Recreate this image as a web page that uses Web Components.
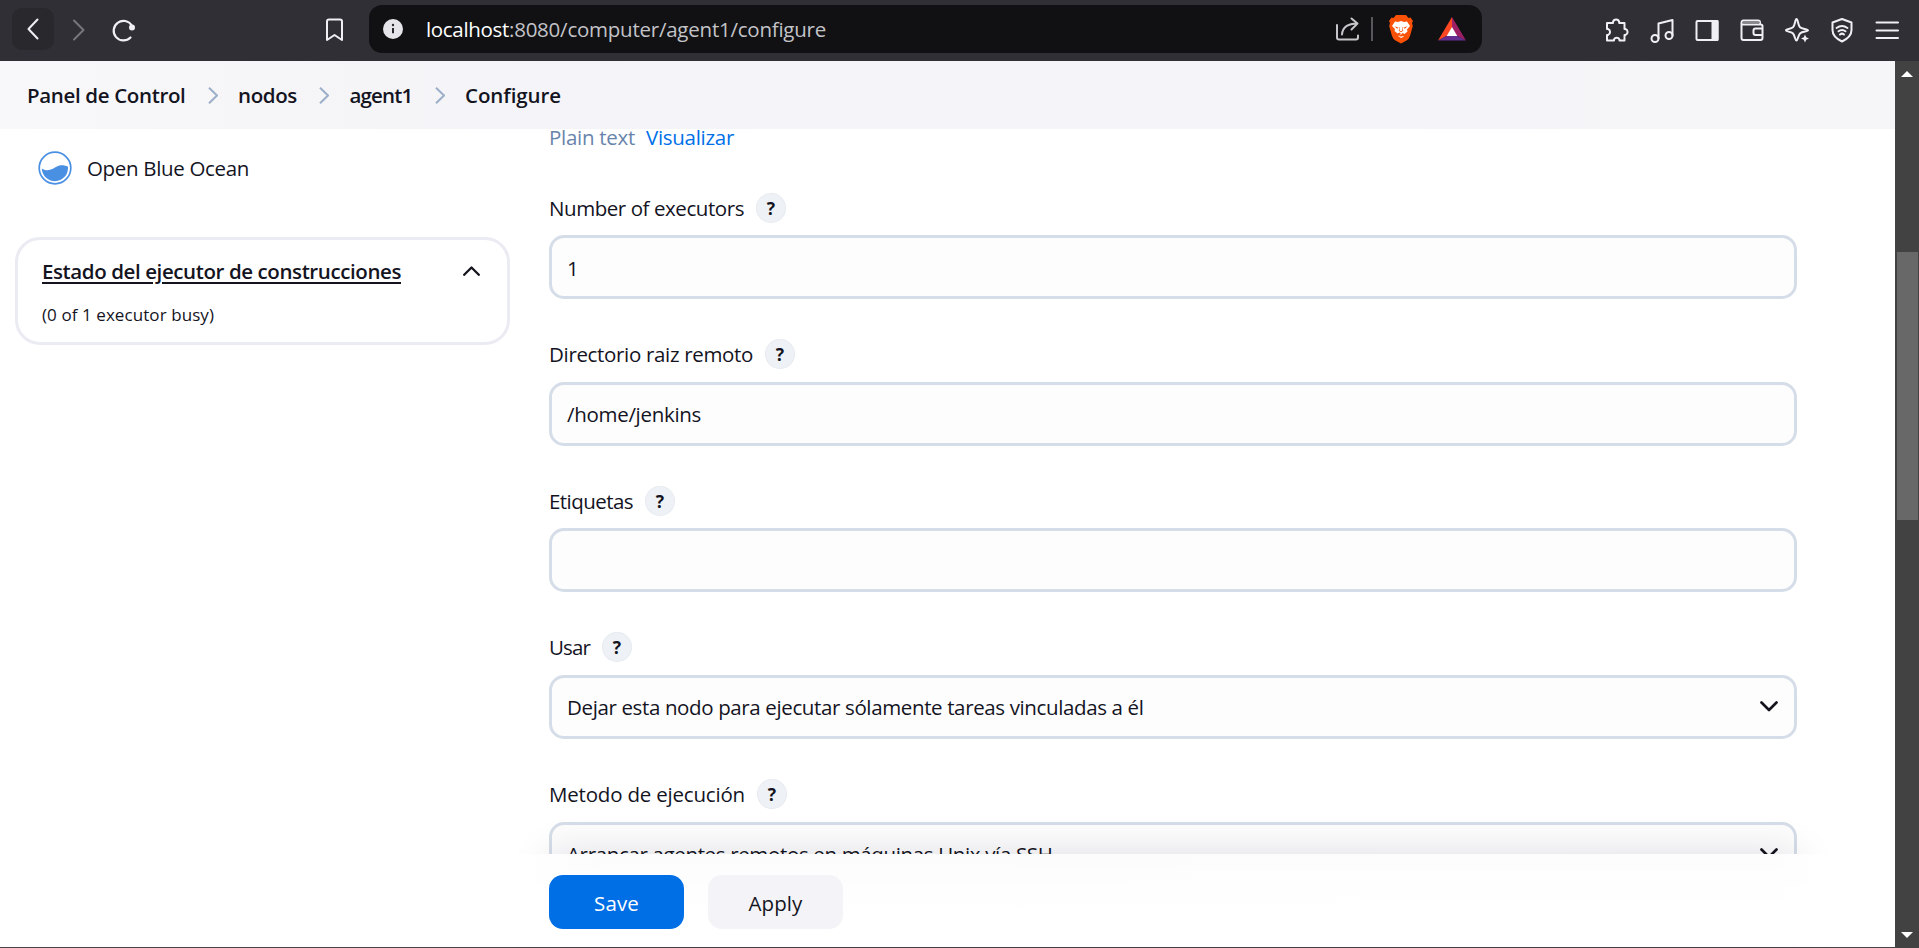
<!DOCTYPE html>
<html lang="es">
<head>
<meta charset="utf-8">
<title>agent1 Configure</title>
<style>
html,body{margin:0;height:100%;overflow:hidden;background:#fff}
body{font-family:"Open Sans","Noto Sans",sans-serif;font-size:20.5px;line-height:28px;color:#14141f}
</style>
</head>
<body>
<app-window></app-window>
<script>
const define = (name, html, after) => customElements.define(name, class extends HTMLElement {
  connectedCallback() {
    if (this.shadowRoot) return;
    const root = this.attachShadow({ mode: 'open' });
    root.innerHTML = typeof html === 'function' ? html(this) : html;
    if (after) after(this, root);
  }
});

define('browser-bar', `
<style>
:host{display:flex;align-items:center;height:61px;flex:none;background:#302f35;box-sizing:border-box;padding:0 20px 13px 12px;color:#fff}
svg{display:block;flex:none;overflow:visible;fill:none;stroke:#f0f0f4;stroke-width:2;stroke-linecap:round;stroke-linejoin:round}
.back{width:42px;height:42px;border-radius:10px;background:#29282d;display:grid;place-items:center;margin-top:10px}
.nav{margin:12px 0 0 19px}
.reload{margin:11px 0 0 27px}
.mark{margin:12px 0 0 190px}
.url{margin:10px 0 0 26px;width:1113px;height:48px;border-radius:13px;background:#111113;display:flex;align-items:center;box-sizing:border-box;padding:0 16px 0 14px}
.url t-fit{margin-left:23px}
.url .path{margin-left:0;color:#c3c3c8}
.share{margin-left:auto}
.sep{width:2px;height:24px;background:#57575c;margin:0 16px 0 12px}
.tools{margin:12px 0 0 auto;display:flex;gap:21px}
</style>
<div class="back"><svg width="12" height="20" viewBox="0 0 12 20"><path d="M10.5.5 1.5 10l9 9.5"/></svg></div>
<svg class="nav" style="stroke:#77767c" width="12" height="20" viewBox="0 0 12 20"><path d="M1 .5 10.500 10 1 19.500"/></svg>
<svg class="reload" width="24" height="24" viewBox="0 0 24 24"><path d="M18.500 19.500A9.800 9.800 0 1 1 19.800 7.500" stroke-width="2.200"/><circle cx="20" cy="9.500" r="3" fill="#f0f0f4" stroke="none"/></svg>
<svg class="mark" width="17" height="24" viewBox="0 0 17 24"><path d="M1 3.500Q1 1.500 3 1.500H14Q16 1.500 16 3.500V22L8.500 17 1 22Z"/></svg>
<div class="url">
<svg width="20" height="20" viewBox="0 0 20 20"><circle cx="10" cy="10" r="10" fill="#e6e5ea" stroke="none"/><path d="M10 9v5.300" stroke="#29282d" stroke-linecap="butt"/><circle cx="10" cy="6" r="1.200" fill="#29282d" stroke="none"/></svg>
<t-fit w="83">localhost</t-fit><t-fit class="path" w="317">:8080/computer/agent1/configure</t-fit>
<svg class="share" style="stroke:#c6c6ca" width="23" height="24" viewBox="0 0 23 24"><path d="M1 8v12.500Q1 22.500 3 22.500H20Q22 22.500 22 20.500V18.500M6 17.500C6.500 10 12 6.500 21.500 6.500M15.500 1.500l6 5-6 6"/></svg>
<span class="sep"></span>
<svg width="24" height="28" viewBox="0 0 24 28" style="stroke:none"><path fill="#fb5106" d="M7 0h10l2.500 3 2-.5L24 6l-1 2 .8 3L21 21q-1 3-3.500 4.500L12 28.500 6.500 25.500Q4 24 3 21L.2 11 1 8 0 6 2.500 2.500l2 .5Z"/><path fill="#fff" d="M6 6.500 9 7l3-1 3 1 3-.5 3 4.500-3 3.500.5 2-3 2.500-2-1-1.500 1.500 3 2L12 23l-3-2 3-2-1.500-1.500-2 1-3-2.500.5-2L3 11Z"/><path fill="#fb5106" d="m5.500 11.500 4 .7 1 1-.8 2.600 2.300 1.400 2.300-1.400-.8-2.600 1-1 4-.7-3.500 2.700.7-1.800H13l.4 3-1.400.8-1.400-.8.4-3H8.300l.7 1.800ZM9 21l3-1.500 3 1.500-3 .5Z"/></svg>
<svg style="stroke:none;margin-left:25px" width="28" height="24" viewBox="0 0 28 24"><path fill="#ff4724" d="M14 0 0 23.500l9.500-5L14 11Z"/><path fill="#9e1f63" d="M14 0 28 23.500l-9.500-5L14 11Z"/><path fill="#662d91" d="M0 23.500h28l-9.500-5h-9Z"/><path fill="#fff" d="m14 10 5.300 9H8.700Z"/></svg>
</div>
<div class="tools">
<svg width="24" height="24" viewBox="0 0 24 24"><path d="M2 5H8V4a3.200 3.200 0 0 1 6.200 0v1H19.500V11h1a3.200 3.200 0 0 1 0 6h-1v5.500H14.500V21.500a3 3 0 0 0-5.500 0v1H2V17H3a3.200 3.200 0 0 0 0-6H2Z"/></svg>
<svg width="24" height="24" viewBox="0 0 24 24"><circle cx="5" cy="20.500" r="3.500"/><circle cx="19" cy="17.500" r="3.500"/><path d="M8.500 20.500V5.500L22.500 2V17.500"/></svg>
<svg width="24" height="24" viewBox="0 0 24 24"><rect x="1.500" y="3" width="21" height="19" rx="1"/><path d="M17.500 3h5v19h-5Z" fill="#f0f0f4"/></svg>
<svg width="24" height="24" viewBox="0 0 24 24"><path d="M1.500 5V20Q1.500 22 3.500 22H20.500Q22.500 22 22.500 20V8Q22.500 6.500 20.500 6.500H2.500M1.500 5Q1.500 2.500 3.500 2.500H18Q20 2.500 20 4.500V6.500M22.500 10.500H15.500Q13.500 10.500 13.500 12.500V15Q13.500 17 15.500 17H22.500"/><path d="M3 4.500H19" stroke="#88878c"/></svg>
<svg width="24" height="24" viewBox="0 0 24 24"><path d="M11.500 1C13 1 13 7.500 15 9.300S23 10.800 23 12.300 17.500 13.200 15.200 15.300 13 22.500 11.500 22.500 10 17.300 7.800 15.300 1 13.800 1 12.300 5.800 11.300 8 9.300 10 1 11.500 1Z"/><path d="M20 16.500 21.200 19.300 24 20.500 21.200 21.700 20 24.500 18.800 21.700 16 20.500 18.800 19.300Z" fill="#f0f0f4" stroke="#302f35" stroke-width="3" paint-order="stroke"/></svg>
<svg width="24" height="24" viewBox="0 0 24 24"><path d="M12 1 21.500 4.500V12Q21.500 19 12 23.500 2.500 19 2.500 12V4.500Z"/><path d="M6.500 10Q12 6 17.500 10M8.500 13.300Q12 10.500 15.500 13.300" stroke-width="1.900"/><path d="M10 16.500q2-1.700 4 0" stroke-width="2"/></svg>
<svg width="24" height="24" viewBox="0 0 24 24"><path d="M1.500 4.500H23M1.500 12.500H23M1.500 20H23"/></svg>
</div>`);

define('crumb-bar', `
<style>
:host{display:flex;align-items:center;height:68px;flex:none;padding-left:27px;background:linear-gradient(90deg,#f8f8fa,#f5f5f8 20%,#f4f4f9 40%,#f4f4f9 75%,#f6f6f8 90%);font-weight:600}
svg{width:10px;height:17px;margin:0 20.5px 0 22px;fill:none;stroke:#9bafc8;stroke-width:2;flex:none}
</style>
<t-fit w="158.5">Panel de Control</t-fit><svg viewBox="0 0 10 17"><path d="m1 .7 8 7.800-8 7.800"/></svg>
<t-fit w="59">nodos</t-fit><svg viewBox="0 0 10 17"><path d="m1 .7 8 7.800-8 7.800"/></svg>
<t-fit w="63">agent1</t-fit><svg viewBox="0 0 10 17"><path d="m1 .7 8 7.800-8 7.800"/></svg>
<t-fit w="96">Configure</t-fit>`);

define('side-panel', `
<style>
:host{display:block;width:549px;flex:none}
.task{display:flex;align-items:center;gap:15px;height:34px;margin:22px 0 0 38px}
svg{display:block;flex:none}
.card{margin:52px 0 0 15px;width:495px;height:108px;box-sizing:border-box;border:3px solid #ebebf3;border-radius:25px;padding:17px 27px 0 24px}
.head{display:flex;justify-content:space-between;align-items:center;font-weight:600}
.head t-fit{text-decoration:underline;text-decoration-thickness:2px;text-underline-offset:3px}
.sub{font-size:17px;margin-top:16px}
.head svg{margin:0}
</style>
<div class="task"><svg width="34" height="34" viewBox="0 0 34 34"><circle cx="17" cy="17" r="15.800" fill="#fff" stroke="#4a90e2" stroke-width="1.700"/><path fill="#4a90e2" d="M3.800 17.500C8 20.500 12 19.500 17 16.500S26 14 30 15.800A13.200 13.200 0 0 1 17 30.200 13.200 13.200 0 0 1 3.800 17.500Z"/></svg><t-fit w="162">Open Blue Ocean</t-fit></div>
<div class="card"><div class="head"><t-fit w="359">Estado del ejecutor de construcciones</t-fit><svg width="17" height="10" viewBox="0 0 17 10"><path d="M1.200 8.800 8.500 1.500l7.300 7.300" fill="none" stroke="#14141f" stroke-width="2.300" stroke-linecap="round" stroke-linejoin="round"/></svg></div>
<div class="sub"><t-fit w="172">(0 of 1 executor busy)</t-fit></div></div>`);

define('form-field', el => `
<style>
:host{display:block;height:106.5px;flex:none}
.label{display:flex;align-items:center;gap:12px;height:30px}
.help{width:30px;height:30px;border-radius:50%;background:#eef1f5;box-shadow:inset 0 0 0 1px #e8ecf1;font-size:17.5px;font-weight:700;text-align:center;line-height:30px}
.box{display:flex;align-items:center;justify-content:space-between;height:64px;box-sizing:border-box;margin-top:12.5px;border:3px solid #d5dde8;border-radius:15px;background:#fdfdfe;padding:0 16px 0 15px}
::slotted(t-fit){padding-top:1px}
</style>
<div class="label"><t-fit w="${el.getAttribute('lw')}">${el.getAttribute('label')}</t-fit><span class="help">?</span></div>
<div class="box"><slot></slot>${el.hasAttribute('select') ? '<svg width="18" height="11" viewBox="0 0 18 11"><path d="M1.500 1.500 9 9l7.500-7.500" fill="none" stroke="#14141f" stroke-width="2.700" stroke-linecap="round" stroke-linejoin="round"/></svg>' : ''}</div>`);

define('config-form', `
<style>
:host{display:flex;flex-direction:column;gap:40.1px;width:1248px}
.format{display:flex;gap:11px;height:28px;margin:-6px 0 1.6px;color:#6884ab;flex:none}
.format .link{color:#0070e8}
</style>
<div class="format"><t-fit w="86">Plain text</t-fit><t-fit class="link" w="88">Visualizar</t-fit></div>
<form-field label="Number of executors" lw="195"><t-fit w="12">1</t-fit></form-field>
<form-field label="Directorio raiz remoto" lw="204"><t-fit w="134">/home/jenkins</t-fit></form-field>
<form-field label="Etiquetas" lw="84"></form-field>
<form-field label="Usar" lw="41" select><t-fit w="576.5">Dejar esta nodo para ejecutar sólamente tareas vinculadas a él</t-fit></form-field>
<form-field label="Metodo de ejecución" lw="196" select><t-fit w="485.5">Arrancar agentes remotos en máquinas Unix vía SSH</t-fit></form-field>`);

define('action-button', `
<style>
:host{display:flex;align-items:center;justify-content:center;width:135px;height:54px;padding-top:1px;box-sizing:border-box;border-radius:14px;background:#f4f4f8}
:host([primary]){background:#006fe6;color:#fff}
</style><slot></slot>`);

define('action-bar', `
<style>
:host{display:grid;grid-template-columns:549px 1248px 1fr;height:93px;flex:none}
.shade{grid-area:1/2;box-shadow:0 0 40px rgba(10,10,30,.13)}
.cover{grid-area:1/1/2/4;position:relative;background:linear-gradient(rgba(255,255,255,0),#fff 60px),linear-gradient(90deg,#fff 515px,#fcfcfc 600px,#fcfcfc 1000px,#fdfdfd 1780px,#fff 1830px)}
.row{grid-area:1/2;position:relative;display:flex;gap:24px;padding-top:21px}
</style>
<div class="shade"></div><div class="cover"></div>
<div class="row"><action-button primary><t-fit w="45">Save</t-fit></action-button><action-button><t-fit w="54">Apply</t-fit></action-button></div>`);

define('scroll-bar', `
<style>
:host{display:flex;flex-direction:column;width:24px;flex:none;background:#424242;align-items:center;box-sizing:border-box;padding:10px 0}
i{border:6px solid transparent;border-top-width:0;border-bottom:6px solid #fff}
b{width:21px;height:268px;margin:175px 0 auto;background:#686868}
i.down{border-top:6px solid #fff;border-bottom-width:0}
</style><i></i><b></b><i class="down"></i>`);

define('app-window', `
<style>
:host{display:flex;flex-direction:column;width:1919px;height:948px;overflow:hidden}
.view{flex:1;display:flex;min-height:0}
.page{flex:1;display:flex;flex-direction:column;min-width:0;box-sizing:border-box;border-bottom:1px solid #4b4348}
.content{flex:1;display:flex;min-height:0;overflow:hidden;background:#fff}
</style>
<browser-bar></browser-bar>
<div class="view"><div class="page"><crumb-bar></crumb-bar><div class="content"><side-panel></side-panel><config-form></config-form></div><action-bar></action-bar></div><scroll-bar></scroll-bar></div>`);

/* Text run tracked to a given advance width. */
define('t-fit', `<style>:host{display:inline-block;white-space:nowrap;flex:none}</style><slot></slot>`, el => {
  const w = +el.getAttribute('w'), now = el.getBoundingClientRect().width;
  if (w && now) el.style.letterSpacing = ((w - now) / [...el.textContent].length) + 'px';
});
</script>
</body>
</html>
